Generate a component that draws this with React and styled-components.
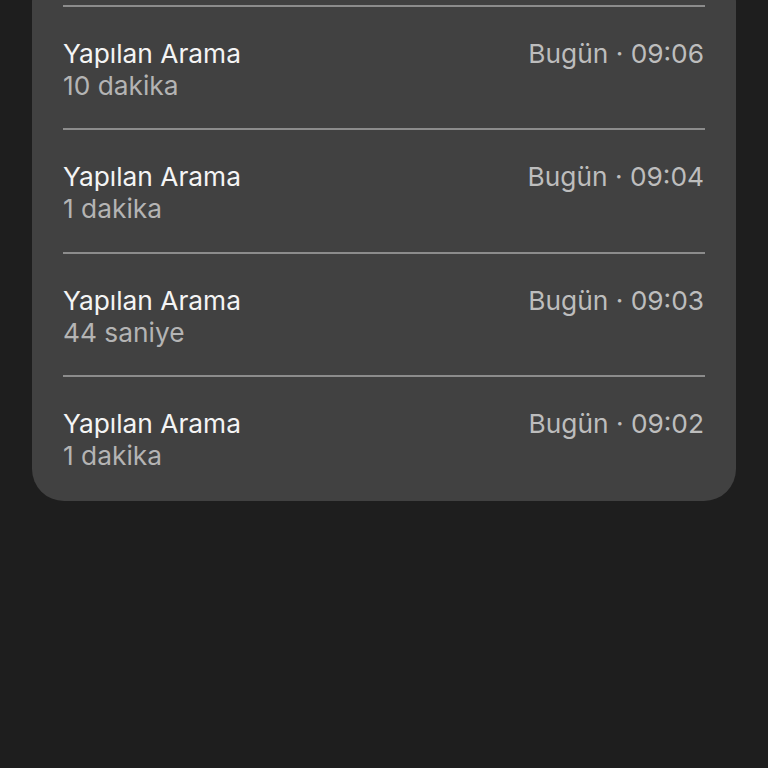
import React from 'react';
import styled, { createGlobalStyle } from 'styled-components';

const GlobalStyle = createGlobalStyle`
    html, body {
        margin: 0;
        padding: 0;
        background: #1e1e1e;
        height: 100%;
        overflow: hidden;
    }
    body {
        font-family: Inter, "Noto Sans", sans-serif;
        -webkit-font-smoothing: antialiased;
    }
`;

const Screen = styled.div`
    width: 768px;
    height: 768px;
    background: #1e1e1e;
    overflow: hidden;
`;

const Card = styled.div`
    margin: -30px 32px 0;
    padding: 35px 31px 0;
    background: #414141;
    border-radius: 32px;
`;

const Row = styled.div`
    display: flex;
    justify-content: space-between;
    align-items: flex-start;
    border-top: 2px solid #8c8c8c;
    padding: 31px 0 26.4px;

    &:last-child {
        padding-bottom: 29px;
    }
`;

const Info = styled.div`
    display: flex;
    flex-direction: column;
`;

const Title = styled.div`
    font-size: 26.3px;
    line-height: 32px;
    color: #f4f4f4;
`;

const Duration = styled.div`
    font-size: 26.3px;
    line-height: 32px;
    color: #b4b4b4;
`;

const When = styled.div`
    font-size: 26.3px;
    line-height: 32px;
    color: #bdbdbd;
    padding-right: 1px;
`;

const calls = [
    { duration: '10 dakika', time: '09:06' },
    { duration: '1 dakika', time: '09:04' },
    { duration: '44 saniye', time: '09:03' },
    { duration: '1 dakika', time: '09:02' },
];

export default function App() {
    return (
        <Screen>
            <GlobalStyle />
            <Card>
                {calls.map((c, i) => (
                    <Row key={`call_${i}`}>
                        <Info>
                            <Title>Yapılan Arama</Title>
                            <Duration>{c.duration}</Duration>
                        </Info>
                        <When>Bugün · {c.time}</When>
                    </Row>
                ))}
            </Card>
        </Screen>
    );
}
